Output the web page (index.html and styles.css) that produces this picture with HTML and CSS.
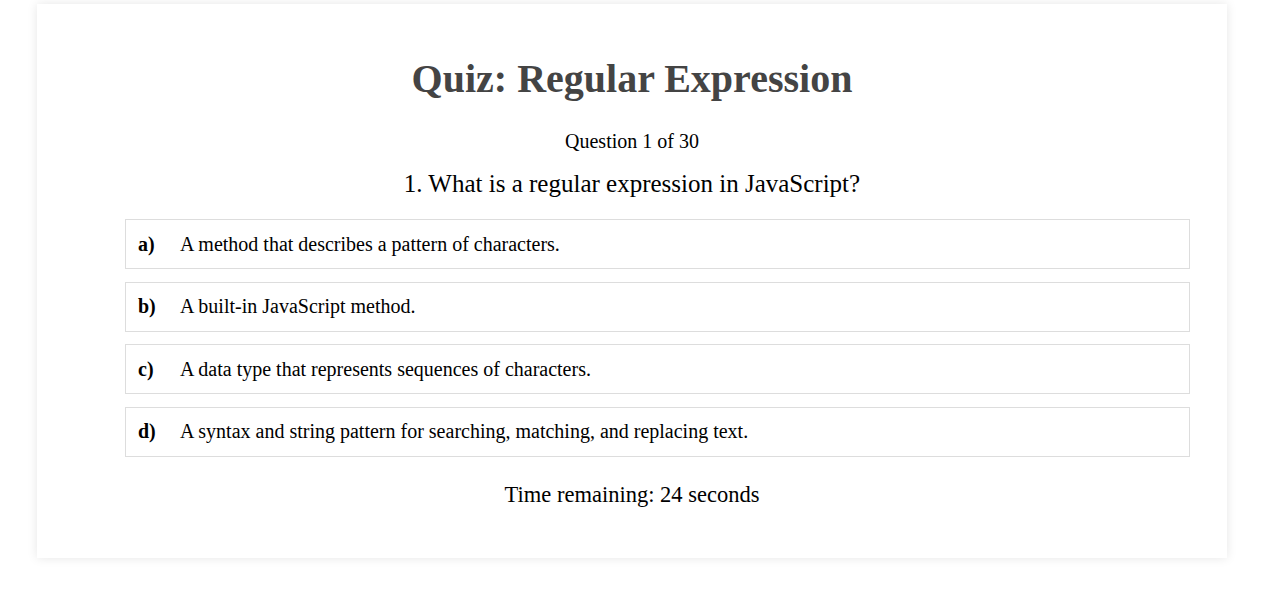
FILE: index.html
```html
<!DOCTYPE html>
<html>
<head>
<meta charset="utf-8">
<link rel="stylesheet" href="styles.css">
</head>
<body>
<div class="card">
  <h1 class="title">Quiz: Regular Expression</h1>
  <p class="progress">Question 1 of 30</p>
  <p class="question">1. What is a regular expression in JavaScript?</p>
  <ul class="options">
    <li class="option"><span class="letter">a)</span><span class="text">A method that describes a pattern of characters.</span></li>
    <li class="option"><span class="letter">b)</span><span class="text">A built-in JavaScript method.</span></li>
    <li class="option"><span class="letter">c)</span><span class="text">A data type that represents sequences of characters.</span></li>
    <li class="option"><span class="letter">d)</span><span class="text">A syntax and string pattern for searching, matching, and replacing text.</span></li>
  </ul>
  <p class="timer">Time remaining: 24 seconds</p>
</div>
</body>
</html>
```
FILE: styles.css
```css
html, body {
  margin: 0;
  padding: 0;
  background: #fff;
  font-family: "Liberation Serif", "Times New Roman", serif;
  color: #000;
}
body {
  padding: 4px 39px 30px 37px;
}
.card {
  background: #fff;
  box-shadow: 0 0 10px rgba(0, 0, 0, 0.1);
  padding: 52px 37px 42px 88px;
  height: 554px;
  box-sizing: border-box;
}
.title {
  margin: 0 0 0 -51px;
  text-align: center;
  font-size: 40px;
  line-height: 46px;
  font-weight: bold;
  color: #444;
}
.progress {
  margin: 28px 0 0 -51px;
  text-align: center;
  font-size: 20px;
  line-height: 22px;
}
.question {
  margin: 17px 0 0 -51px;
  text-align: center;
  font-size: 25px;
  line-height: 30px;
}
.options {
  list-style: none;
  margin: 20px 0 0 0;
  padding: 0;
}
.option {
  display: flex;
  align-items: center;
  height: 50px;
  box-sizing: border-box;
  border: 1px solid #ddd;
  padding: 0 12px;
  margin-bottom: 12.67px;
  font-size: 20px;
}
.letter {
  font-weight: bold;
  width: 42px;
}
.timer {
  margin: 24px 0 0 -51px;
  text-align: center;
  font-size: 22.5px;
  line-height: 28px;
}
```
